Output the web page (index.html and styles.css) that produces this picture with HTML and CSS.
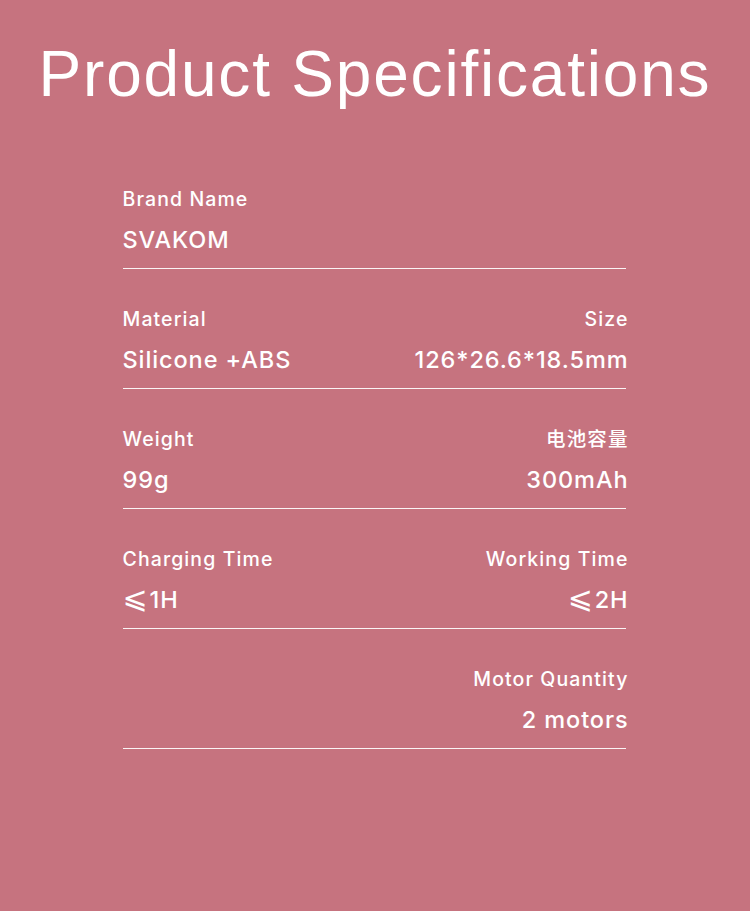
FILE: index.html
```html
<!DOCTYPE html>
<html lang="en">
<head>
<meta charset="utf-8">
<title>Product Specifications</title>
<link rel="stylesheet" href="styles.css">
</head>
<body>
<main class="page">
  <h1 class="title">Product Specifications</h1>
  <section class="specs">
    <div class="row">
      <div class="cell">
        <div class="label">Brand Name</div>
        <div class="value">SVAKOM</div>
      </div>
      <div class="cell right"></div>
    </div>
    <div class="row">
      <div class="cell">
        <div class="label">Material</div>
        <div class="value">Silicone +ABS</div>
      </div>
      <div class="cell right">
        <div class="label">Size</div>
        <div class="value">126*26.6*18.5mm</div>
      </div>
    </div>
    <div class="row">
      <div class="cell">
        <div class="label">Weight</div>
        <div class="value">99g</div>
      </div>
      <div class="cell right">
        <div class="label">电池容量</div>
        <div class="value">300mAh</div>
      </div>
    </div>
    <div class="row">
      <div class="cell">
        <div class="label">Charging Time</div>
        <div class="value"><span class="sym">⩽</span>1H</div>
      </div>
      <div class="cell right">
        <div class="label">Working Time</div>
        <div class="value"><span class="sym">⩽</span>2H</div>
      </div>
    </div>
    <div class="row">
      <div class="cell"></div>
      <div class="cell right">
        <div class="label">Motor Quantity</div>
        <div class="value">2 motors</div>
      </div>
    </div>
  </section>
</main>
</body>
</html>
```

FILE: styles.css
```css
html, body {
  margin: 0;
  padding: 0;
}
body {
  background: #c6737f;
  color: #ffffff;
  font-family: Inter, "Noto Sans CJK SC", "DejaVu Sans", sans-serif;
  width: 750px;
  height: 911px;
  overflow: hidden;
}
.page {
  display: flex;
  flex-direction: column;
  align-items: center;
  padding-top: 34px;
}
.title {
  margin: 0;
  font-family: "Liberation Sans", sans-serif;
  font-weight: 400;
  font-size: 64px;
  line-height: 80px;
  letter-spacing: 1.8px;
  white-space: nowrap;
}
.specs {
  width: 503px;
  margin-top: 35px;
  margin-left: -2px;
  display: flex;
  flex-direction: column;
}
.row {
  display: grid;
  grid-template-columns: 1fr 1fr;
  padding-top: 38px;
  padding-bottom: 13px;
  border-bottom: 1px solid rgba(255, 255, 255, 0.92);
}
.cell {
  display: flex;
  flex-direction: column;
  gap: 14px;
}
.cell.right {
  text-align: right;
  margin-right: -3px;
}
.label {
  font-size: 19.5px;
  font-weight: 500;
  line-height: 24px;
  letter-spacing: 1.1px;
}
.value {
  font-size: 23.5px;
  font-weight: 500;
  line-height: 30px;
  letter-spacing: 0.9px;
}
.sym {
  font-family: "DejaVu Sans", sans-serif;
  font-size: 30px;
  line-height: 0;
  margin-right: 1px;
}
```
